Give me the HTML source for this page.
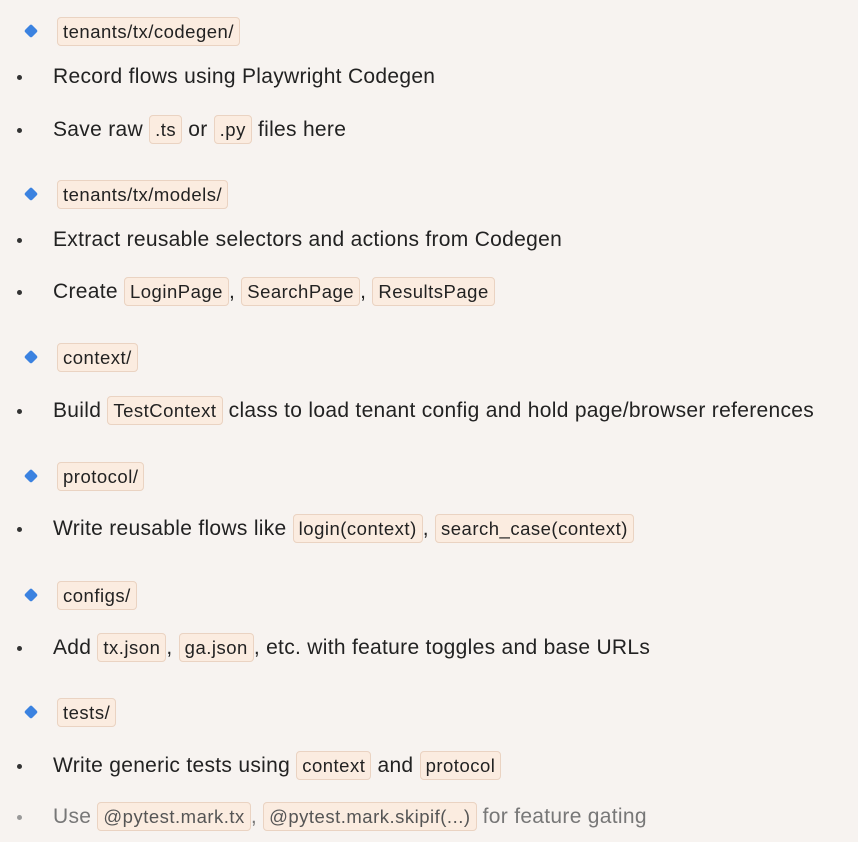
<!DOCTYPE html>
<html><head><meta charset="utf-8"><style>
html,body{margin:0;padding:0;background:#f7f3f0;width:858px;height:842px;overflow:hidden}
body{font-family:"Liberation Sans",sans-serif;color:#222;position:relative}
.r{position:absolute;left:53px;height:28px;line-height:28px;font-size:21px;letter-spacing:0.3px;white-space:nowrap}
.h{left:57px}
.d{position:absolute;left:26px;width:10px;height:10px;background:#3b82e0;transform:rotate(45deg);border-radius:2px}
.b{position:absolute;left:17px;width:5px;height:5px;border-radius:50%;background:#333}
code{font-family:"Liberation Sans",sans-serif;font-size:18.5px;letter-spacing:0.5px;background:#fbece0;border:1px solid #ead3c2;border-radius:4px;padding:3px 5px;color:#222}
.g{color:#777}
.g code{color:#555}
</style></head><body>
<div class="d" style="top:26px"></div><div class="r h" style="top:18px"><code>tenants/tx/codegen/</code></div>
<div class="b" style="top:75px"></div><div class="r" style="top:63px">Record flows using Playwright Codegen</div>
<div class="b" style="top:128px"></div><div class="r" style="top:116px">Save raw <code>.ts</code> or <code>.py</code> files here</div>

<div class="d" style="top:189px"></div><div class="r h" style="top:181px"><code>tenants/tx/models/</code></div>
<div class="b" style="top:238px"></div><div class="r" style="top:226px">Extract reusable selectors and actions from Codegen</div>
<div class="b" style="top:290px"></div><div class="r" style="top:278px">Create <code>LoginPage</code>, <code>SearchPage</code>, <code>ResultsPage</code></div>

<div class="d" style="top:352px"></div><div class="r h" style="top:344px"><code>context/</code></div>
<div class="b" style="top:409px"></div><div class="r" style="top:397px">Build <code>TestContext</code> class to load tenant config and hold page/browser references</div>

<div class="d" style="top:471px"></div><div class="r h" style="top:463px"><code>protocol/</code></div>
<div class="b" style="top:527px"></div><div class="r" style="top:515px">Write reusable flows like <code>login(context)</code>, <code>search_case(context)</code></div>

<div class="d" style="top:590px"></div><div class="r h" style="top:582px"><code>configs/</code></div>
<div class="b" style="top:646px"></div><div class="r" style="top:634px">Add <code>tx.json</code>, <code>ga.json</code>, etc. with feature toggles and base URLs</div>

<div class="d" style="top:707px"></div><div class="r h" style="top:699px"><code>tests/</code></div>
<div class="b" style="top:764px"></div><div class="r" style="top:752px">Write generic tests using <code>context</code> and <code>protocol</code></div>
<div class="b" style="top:815px;background:#999"></div><div class="r g" style="top:803px">Use <code>@pytest.mark.tx</code>, <code>@pytest.mark.skipif(...)</code> for feature gating</div>
</body></html>
